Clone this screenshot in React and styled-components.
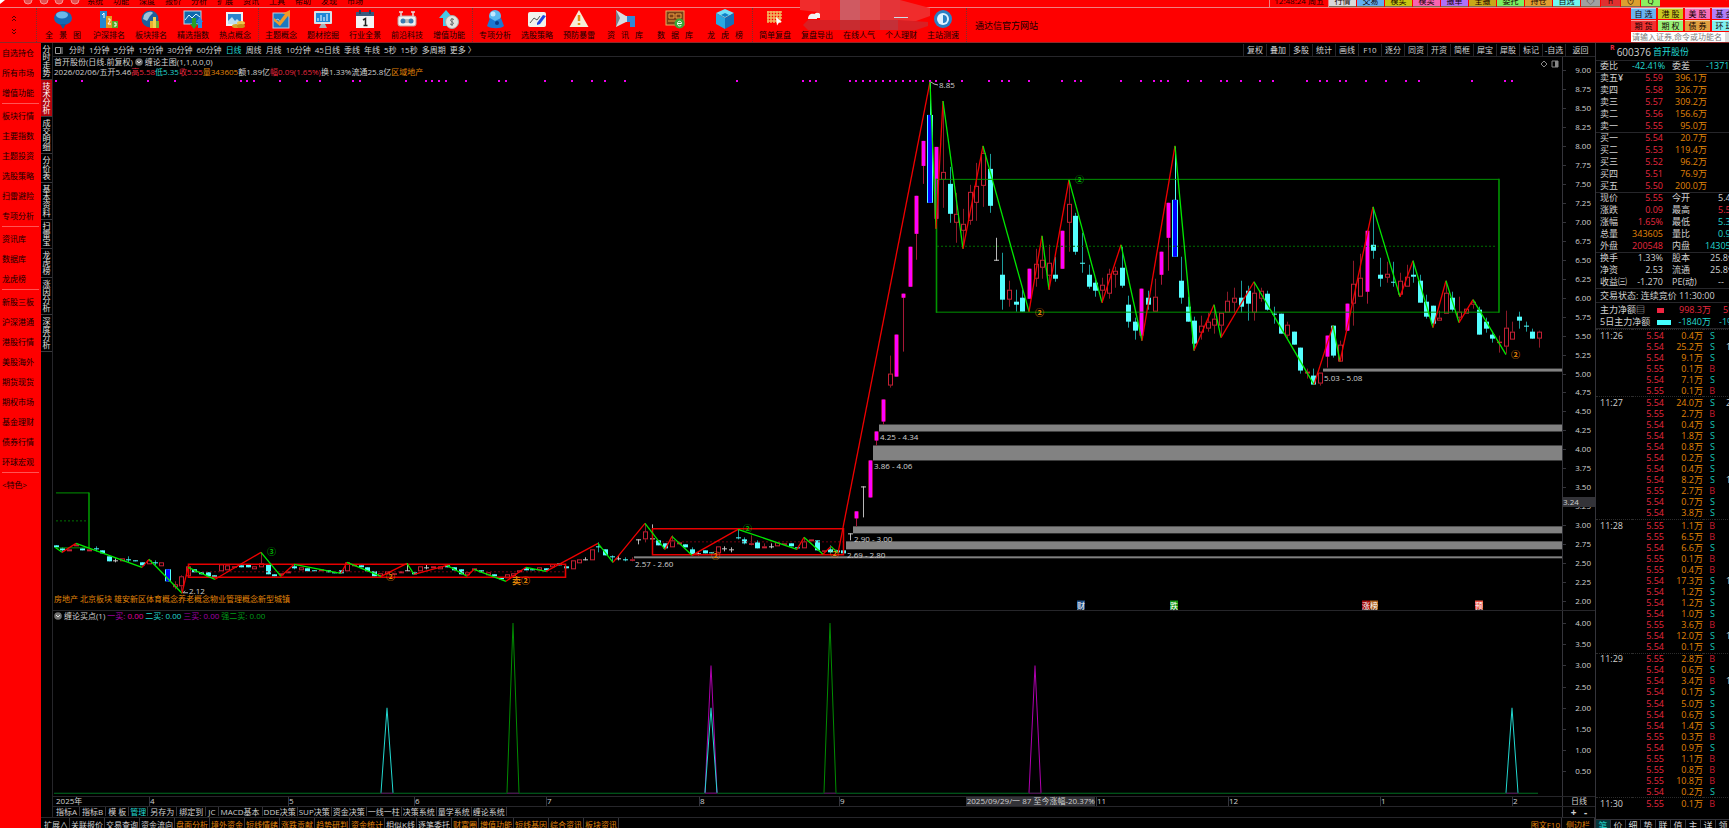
import React from "react";
import styled, { createGlobalStyle } from "styled-components";

const RED = "#fe0000";
const LINE = "#26262a";
const UP = "#e8283f";
const DOWN = "#22d8d0";
const AMBER = "#e08408";
const LIGHT = "#d0d0d0";

const Global = createGlobalStyle`
  *, *::before, *::after { box-sizing: border-box; }
  html, body { margin: 0; height: 100%; background: #000; overflow: hidden; }
  body { font: 8px/10px "Open Sans", "Noto Sans CJK SC", sans-serif; color: ${LIGHT}; }
  button, input { font: inherit; color: inherit; border: 0; margin: 0; padding: 0; background: none; white-space: nowrap; }
  a { color: inherit; text-decoration: none; }
  ul { list-style: none; margin: 0; padding: 0; }
`;

const Page = styled.div`
  display: flex;
  flex-direction: column;
  height: 100vh;
  overflow: hidden;
`;

/* ---------- header ---------- */
const Header = styled.header`
  position: relative;
  flex: none;
  background: ${RED};
  color: #140000;
  border-bottom: 1px solid #8c2a2a;
`;
const MenuStrip = styled.div`
  display: flex;
  align-items: flex-end;
  height: 8px;
  overflow: hidden;
  border-bottom: 1px solid #f08080;
`;
const WindowMarks = styled.svg`
  flex: none;
  width: 82px;
  height: 7px;
  margin-right: 5px;
`;
const MenuList = styled.nav`
  display: flex;
  flex: 1;
  gap: 10px;
`;
const MenuLink = styled.a`
  height: 12px;
  line-height: 12px;
`;
const Clock = styled.time`
  padding: 0 4px;
  height: 12px;
  line-height: 12px;
  border-left: 1px solid #f08080;
`;
const TradeButtons = styled.div`
  display: flex;
  gap: 1px;
  width: 401px;
  border-left: 1px solid #f08080;
`;
const TradeButton = styled.button`
  flex: none;
  width: ${(p) => (p.$small ? 19 : 27)}px;
  height: 12px;
  line-height: 10px;
  background: ${(p) => p.$bg};
  border-bottom: 1px solid #7c6a50;
`;
const WindowButtons = styled.svg`
  width: 64px;
  height: 7px;
  margin-left: 4px;
`;
const Toolbar = styled.div`
  display: flex;
  height: 34px;
`;
const Pager = styled.div`
  display: flex;
  flex-direction: column;
  justify-content: space-evenly;
  align-items: center;
  width: 36px;
  padding-right: 9px;
`;
const Chevron = styled.button`
  display: block;
  height: 8px;
  svg { display: block; }
`;
const Divider = styled.i`
  width: ${(p) => (p.$tight ? 1 : 3)}px;
  flex: none;
  margin-right: 1px;
  border-right: 1px dotted #7a3030;
`;
const Tool = styled.button`
  display: flex;
  flex-direction: column;
  align-items: center;
  flex: none;
  width: ${(p) => (p.$wide ? 50 : 42)}px;
  padding-top: 1px;
  line-height: 12px;
  svg { display: block; width: 20px; height: 20px; }
  span { word-spacing: 4px; }
`;
const SiteLink = styled.a`
  align-self: center;
  margin: 1px auto 0 7px;
  font-size: 9px;
`;
const Shortcuts = styled.div`
  width: 99px;
  flex: none;
  padding-left: 1px;
  overflow: hidden;
`;
const ShortcutGrid = styled.div`
  display: grid;
  grid-template-columns: repeat(4, 25px);
  grid-auto-rows: 11px;
  gap: 1px 2px;
`;
const Shortcut = styled.button`
  line-height: 10px;
  background: ${(p) => p.$bg};
  border-top: 1px solid #ffffff88;
`;
const SearchBox = styled.label`
  display: flex;
  height: 10px;
  margin-top: 1px;
  background: #fff;
  input { flex: 1; min-width: 0; color: #333; padding-left: 1px; height: 10px; }
  input::placeholder { color: #7c7c7c; opacity: 1; }
  button { width: 4px; background: #ddd; }
`;
const Smudge = styled.svg`
  position: absolute;
  left: 798px;
  top: 0;
`;

/* ---------- frame ---------- */
const Body = styled.div`
  display: flex;
  flex: 1;
  min-height: 0;
`;
const Sidebar = styled.nav`
  flex: none;
  width: 41px;
  background: ${RED};
  color: #140000;
`;
const SideLink = styled.a`
  display: block;
  height: 20px;
  line-height: 20px;
  padding-left: 2px;
`;
const SideRule = styled.hr`
  height: 3px;
  margin: 0 2px;
  border: 0;
  border-top: 1px solid #ff5454;
`;
const Center = styled.div`
  display: flex;
  flex-direction: column;
  flex: 1;
  min-width: 0;
`;
const Work = styled.div`
  display: flex;
  flex: 1;
  min-height: 0;
`;
const SideTabs = styled.div`
  flex: none;
  width: 12px;
  border-right: 1px solid ${LINE};
`;
const SideTab = styled.button`
  display: block;
  width: 11px;
  padding: 2px 1px;
  line-height: 8px;
  white-space: normal;
  word-break: break-all;
  border-bottom: 1px solid #3a3a3e;
  background: ${(p) => (p.$on ? "#b4060e" : "#000")};
  color: ${(p) => (p.$on ? "#fff" : "#e0e0e0")};
`;
const ChartColumn = styled.main`
  display: flex;
  flex-direction: column;
  flex: 1;
  min-width: 0;
`;
const PeriodBar = styled.div`
  display: flex;
  align-items: center;
  flex: none;
  height: 14px;
  border-bottom: 1px solid ${LINE};
`;
const Periods = styled.div`
  display: flex;
  flex: 1;
  gap: 4px;
  padding-left: 2px;
  svg { flex: none; }
`;
const Period = styled.button`
  color: ${(p) => (p.$on ? DOWN : LIGHT)};
`;
const Function = styled.button`
  width: 23px;
  height: 12px;
  border-left: 1px solid ${LINE};
  &:last-child { width: 30px; }
`;

/* ---------- panes ---------- */
const Pane = styled.section`
  display: flex;
  flex: ${(p) => p.$share} 1 0;
  min-height: 0;
  border-top: ${(p) => (p.$ruled ? `1px solid ${LINE}` : "0")};
`;
const Plot = styled.div`
  display: flex;
  flex-direction: column;
  flex: 1;
  min-width: 0;
`;
const InfoLine = styled.div`
  display: flex;
  align-items: center;
  flex: none;
  height: 10px;
  gap: ${(p) => p.$gap ?? 0}px;
  padding-left: 1px;
  white-space: nowrap;
`;
const Tint = styled.span`
  color: ${(p) => p.$color ?? LIGHT};
`;
const Canvas = styled.div`
  position: relative;
  flex: 1;
  min-height: 0;
  svg.plot { display: block; width: 100%; height: 100%; }
`;
const Note = styled.span`
  position: absolute;
  transform: translateY(-50%);
  white-space: nowrap;
  color: ${(p) => p.$color ?? LIGHT};
`;
const Mark = styled(Note)`
  font-size: 9px;
  font-weight: 700;
`;
const Flag = styled.span`
  position: absolute;
  transform: translateY(-50%);
  width: 8px;
  height: 9px;
  line-height: 9px;
  color: #fff;
  background: ${(p) => p.$bg};
`;
const Concepts = styled.div`
  position: absolute;
  left: 1px;
  bottom: 6px;
  display: flex;
  color: ${AMBER};
  a:first-child, a:nth-child(2) { margin-right: 2px; }
`;
const PaneTools = styled.svg`
  position: absolute;
  right: 2px;
  top: -18px;
`;
const Axis = styled.ol`
  position: relative;
  display: flex;
  flex-direction: column;
  justify-content: space-between;
  flex: none;
  width: 33px;
  margin: 0;
  padding: ${(p) => p.$pad};
  list-style: none;
  text-align: right;
  border-left: 1px solid #34343a;
  li { position: relative; height: 10px; padding-right: 4px; }
  li::before {
    content: "";
    position: absolute;
    left: 0;
    top: 5px;
    width: 3px;
    border-top: 1px solid #34343a;
  }
`;
const CursorPrice = styled.output`
  position: absolute;
  left: 0;
  right: 0;
  top: 79.5%;
  height: 10px;
  text-align: left;
  background: #333338;
`;
const DateRow = styled.div`
  display: flex;
  flex: none;
  height: 10px;
  border-top: 1px solid ${LINE};
  line-height: 8px;
`;
const Months = styled.div`
  display: flex;
  flex: 1;
`;
const Month = styled.span`
  position: relative;
  flex: ${(p) => p.$span} 1 0;
  min-width: 0;
  text-indent: 1px;
  box-shadow: inset 1px 0 0 #34343a;
  white-space: nowrap;
  &:first-child { box-shadow: none; text-indent: 3px; }
`;
const DateCursor = styled.output`
  position: absolute;
  right: 1px;
  top: 0;
  height: 9px;
  background: #333338;
`;
const Corner = styled.div`
  display: flex;
  justify-content: ${(p) => (p.$split ? "space-evenly" : "center")};
  flex: none;
  width: 33px;
  border-left: 1px solid #34343a;
  button { font-size: 10px; font-weight: 700; line-height: 9px; }
`;
const TabRow = styled.div`
  display: flex;
  flex: none;
  height: 11px;
  overflow: hidden;
  border-top: 1px solid ${LINE};
  line-height: ${(p) => (p.$low ? 13 : 9)}px;
`;
const Tabs = styled.div`
  display: flex;
  flex: 1;
  min-width: 0;
  padding-left: ${(p) => p.$inset}px;
`;
const Tab = styled.button`
  flex: none;
  align-self: flex-start;
  padding: 0 ${(p) => p.$pad ?? 1}px;
  border-right: 1px solid #34343a;
  color: ${(p) => p.$color ?? LIGHT};
`;

/* ---------- quote panel ---------- */
const Quote = styled.aside`
  display: flex;
  flex-direction: column;
  flex: none;
  width: 134px;
  overflow: hidden;
  border-left: 1px solid #34343a;
  font-size: 9px;
`;
const StockTitle = styled.h1`
  display: flex;
  align-items: center;
  gap: 2px;
  flex: none;
  height: 17px;
  margin: 0;
  padding-left: 14px;
  font-size: 10px;
  font-weight: 400;
  box-shadow: 0 1px 0 ${LINE};
  sup { font-size: 7px; line-height: 9px; align-self: flex-start; color: ${UP}; font-weight: 700; }
  b { font-weight: 400; font-size: 9px; color: ${DOWN}; }
`;
const Block = styled.div`
  flex: none;
  padding: ${(p) => (p.$roomy ? 2 : 0)}px 0 0 4px;
  box-shadow: 0 1px 0 ${LINE};
`;
const Line = styled.div`
  display: grid;
  grid-template-columns: ${(p) => p.$cols};
  height: 12px;
  line-height: 12px;
  white-space: nowrap;
`;
const Cell = styled.span`
  text-align: ${(p) => (p.$right ? "right" : "left")};
  padding-left: ${(p) => p.$in ?? 0}px;
  color: ${(p) => p.$color ?? LIGHT};
`;
const Swatch = styled.i`
  align-self: center;
  width: ${(p) => p.$w}px;
  height: 5px;
  background: ${(p) => p.$bg};
`;
const TickArea = styled.div`
  flex: 1;
  min-height: 0;
  padding: 1px 0 9px;
`;
const Ticks = styled.table`
  width: 150px;
  height: 100%;
  table-layout: fixed;
  border-collapse: collapse;
  font-size: 9px;
  line-height: 10px;
  td { padding: 0; text-align: right; color: ${AMBER}; white-space: nowrap; }
  td:first-child { width: 36px; padding-left: 4px; text-align: left; color: ${LIGHT}; }
  td:nth-child(2) { width: 32px; color: ${UP}; }
  td:nth-child(3) { width: 39px; }
  td:nth-child(4) { width: 12px; }
  td:nth-child(5) { text-align: left; padding-left: 11px; color: ${LIGHT}; }
`;
const TickRow = styled.tr`
  border-top: ${(p) => (p.$first ? "1px dotted #2c2c2c" : "0")};
  && td:nth-child(4) { color: ${(p) => (p.$buy ? "#c81c30" : "#18c8b8")}; }
`;
const QuoteTabs = styled.div`
  display: flex;
  flex: none;
  height: 9px;
  border-top: 1px solid #34343a;
  overflow: hidden;
`;
const QuoteTab = styled.button`
  flex: none;
  width: 15px;
  height: 12px;
  border-right: 1px solid #34343a;
  color: ${(p) => (p.$on ? DOWN : LIGHT)};
  background: ${(p) => (p.$on ? "#06363a" : "none")};
`;

/* ---------- icons ---------- */
const ICONS = {
  globe: (
    <>
      <ellipse cx="10" cy="9" rx="9" ry="7" fill="#1668b4" />
      <ellipse cx="9" cy="6" rx="6" ry="3.4" fill="#6bb8ea" />
      <path d="M7 15h6l-3 5z" fill="#125a9c" />
    </>
  ),
  podium: (
    <>
      <rect x="1" y="2" width="7" height="17" fill="#2488d0" />
      <rect x="7" y="7" width="6" height="12" fill="#e09a20" />
      <rect x="13" y="12" width="6" height="7" fill="#58a828" />
      <path d="M3 6l2-2v5M9 10h2v2l-2 3h3M15 14h2v3h-2" stroke="#fff" fill="none" />
    </>
  ),
  earthbars: (
    <>
      <circle cx="9" cy="10" r="8.5" fill="#1d5f9c" />
      <path d="M3 6c3-4 8-4 9-2l-3 3-3 5-4-2z" fill="#9fc4d8" />
      <rect x="9" y="12" width="3" height="7" fill="#e8b030" />
      <rect x="12" y="8" width="3" height="11" fill="#f4d050" />
      <rect x="15" y="12" width="3" height="7" fill="#78b030" />
    </>
  ),
  indices: (
    <>
      <rect x="1" y="2" width="17" height="13" fill="#0e6aac" stroke="#b8d8ea" />
      <path d="M2 11l4-5 3 3 4-4 4 3" stroke="#d8f0ff" fill="none" />
      <path d="M9 9h4v6h2l-4 5-4-5h2z" fill="#28a028" />
      <path d="M15 19v-6h-2l4-5 3 5h-1v6z" fill="#2a8ae0" />
    </>
  ),
  photo: (
    <>
      <rect x="1" y="3" width="17" height="14" fill="#eef4f8" />
      <rect x="3" y="5" width="13" height="10" fill="#2c84cc" />
      <path d="M3 12l4-4 3 4 2-2 4 4v1H3z" fill="#bfe0f0" />
      <ellipse cx="11" cy="17" rx="4" ry="2" fill="#d8a028" />
      <ellipse cx="16" cy="14" rx="4" ry="2" fill="#f0c848" />
      <ellipse cx="16" cy="17" rx="4" ry="2" fill="#c88c18" />
    </>
  ),
  rise: (
    <>
      <rect x="2" y="4" width="16" height="15" fill="#1c78c0" stroke="#b8d0e0" />
      <path d="M3 12l4-2 3 4 6-8" stroke="#9fd0f0" fill="none" />
      <path d="M3 9l5 4 6-8h-3l8-4v8l-2-2-8 10-6-5z" fill="#f09a28" />
    </>
  ),
  monitor: (
    <>
      <rect x="1" y="2" width="18" height="13" rx="1" fill="#d8e0e6" />
      <rect x="3" y="4" width="14" height="9" fill="#1c86d8" />
      <path d="M5 12V9M8 12V6M11 12V8M14 12V5" stroke="#fff" />
      <path d="M8 15h4l2 4H6z" fill="#a8b0b8" />
    </>
  ),
  calendar: (
    <>
      <rect x="1" y="3" width="18" height="16" fill="#f4f4f4" />
      <rect x="1" y="3" width="18" height="4" fill="#3a5a7c" />
      <path d="M5 1v4M15 1v4" stroke="#26405c" strokeWidth="2" />
      <path d="M8 11l2.5-1.500v7M8.500 16.500h4" stroke="#222" strokeWidth="1.500" fill="none" />
    </>
  ),
  robot: (
    <>
      <rect x="1" y="7" width="18" height="10" rx="2" fill="#f0f0f0" stroke="#c0a0a0" />
      <path d="M4 7V3M16 7V3M2 3h4M14 3h4" stroke="#e8d8d8" strokeWidth="1.500" />
      <circle cx="6" cy="12" r="2.500" fill="#3a7ab0" />
      <circle cx="14" cy="12" r="2.500" fill="#3a7ab0" />
      <path d="M9 10v4M11 10v4" stroke="#888" />
    </>
  ),
  dollar: (
    <>
      <path d="M7 1l7 8h-3v8H4V9H0z" fill="#48c8e8" />
      <circle cx="13" cy="13" r="6.500" fill="#e4e4e0" stroke="#aaa" />
      <path d="M15 10.500c-3-1.500-5 1-2 2.300s1 3.700-2 2.200M13 9v8" stroke="#666" fill="none" />
    </>
  ),
  analyst: (
    <>
      <circle cx="10" cy="7" r="6" fill="#58b8f0" />
      <path d="M2 17l3-8 5 3 6-3 3 8c-3 3-13 3-17 0z" fill="#1c78d0" />
      <circle cx="8" cy="5" r="2.500" fill="#c0e8ff" />
      <circle cx="12" cy="14" r="2" fill="#0c3c88" />
    </>
  ),
  strategy: (
    <>
      <rect x="1" y="3" width="18" height="15" rx="2" fill="#f2f2ec" />
      <path d="M3 14l4-5 3 2 3-4" stroke="#555" fill="none" />
      <path d="M10 14l6-8 3 1-6 8-3 1z" fill="#2048e0" />
    </>
  ),
  warning: (
    <>
      <path d="M10 1l9.500 17H.5z" fill="#f6eed8" />
      <path d="M10 6v6M10 14v2" stroke="#e09018" strokeWidth="2.500" />
    </>
  ),
  horn: (
    <>
      <path d="M1 1l10 6h7v6h-7L1 18z" fill="#d8dce0" />
      <path d="M1 1l4 8-4 9z" fill="#78828c" />
      <path d="M12 7h8v11h-5v-5h-3z" fill="#3088d8" />
    </>
  ),
  database: (
    <>
      <rect x="1" y="2" width="18" height="14" fill="#7a4018" stroke="#e8b060" />
      <path d="M4 5h5v4H4zM11 5h5v4h-5zM3 12h10" stroke="#f0a040" fill="none" />
      <circle cx="14.500" cy="14.500" r="5" fill="#38a838" />
      <path d="M12.500 14.500h4c0-3-4-3-4 0s3 3 4 1.500" stroke="#fff" fill="none" />
    </>
  ),
  cube: (
    <>
      <path d="M10 0l9 4-9 5-9-5z" fill="#70e0f8" />
      <path d="M1 4l9 5v11l-9-5z" fill="#28a8e0" />
      <path d="M19 4l-9 5v11l9-5z" fill="#1470b8" />
      <path d="M10 4l4 2-4 2-4-2z" fill="#0f80c8" />
    </>
  ),
  grid: (
    <>
      <path d="M3 2v12M6 2v12M9 2v12M12 2v12M15 2v12M2 3h15M2 6h15M2 9h15M2 12h11" stroke="#f0b860" strokeWidth="1.500" />
      <path d="M11 8l6 5-3 .5-2 3z" fill="#fff" />
    </>
  ),
  lamp: <path d="M6 9c0-7 9-7 9 0z" fill="#f4f4f4" />,
  none: null,
  bank: <path d="M3 6h15M4 18h14" stroke="#d8e0e8" strokeWidth="2" />,
  speed: (
    <>
      <circle cx="10" cy="10" r="9" fill="#2a80c4" />
      <circle cx="10" cy="10" r="6" fill="#dff2ff" />
      <path d="M10 6a4 4 0 0 1 0 8z" fill="#2a80c4" />
    </>
  ),
};
const Icon = ({ name }) => <svg viewBox="0 0 20 20" aria-hidden="true">{ICONS[name]}</svg>;

const TOOLS = [
  ["全 景 图", "globe", 1], ["沪深排名", "podium"], ["板块排名", "earthbars"], ["精选指数", "indices"], ["热点概念", "photo"], null,
  ["主题概念", "rise"], ["题材挖掘", "monitor"], ["行业全景", "calendar"], ["前沿科技", "robot"], ["增值功能", "dollar"], null,
  ["专项分析", "analyst"], ["选股策略", "strategy"], ["预防暴雷", "warning"], ["资 讯 库", "horn", 1], ["数 据 库", "database", 1], ["龙 虎 榜", "cube", 1], null,
  ["简单复盘", "grid"], ["复盘导出", "lamp"], ["在线人气", "none"], ["个人理财", "bank"], ["主站测速", "speed"], null,
];
const MENUS = "系统 功能 深度 报价 分析 扩展 资讯 工具 帮助 发现 市场".split(" ");
const TRADES = [
  ["行情", "#d8d8d8"], ["交易", "#62aef0"], ["模买", "#c8c810"], ["模卖", "#f864b0"], ["撤单", "#b070f8"],
  ["全撤", "#c8a818"], ["委托", "#7af060"], ["持仓", "#e0a030"], ["自选", "#70f8f0"],
  ["◇", "#a0a0a0", 1], ["п", "#e03030", 1], ["⊙", "#dca030", 1], ["Q", "#8cf060", 1],
];
const SHORTCUTS = [
  ["自 选", "#68b4f0"], ["港 股", "#c8c820"], ["美 股", "#f870b8"], ["基 金", "#b080f8"],
  ["期 货", "#f03030"], ["期 权", "#98f078"], ["债 券", "#e0a040"], ["环 球", "#80f0f0"],
];
const SIDE = [
  ["自选持仓", "所有市场", "增值功能"],
  ["板块行情", "主要指数", "主题投资", "选股策略", "扫雷避险", "专项分析"],
  ["资讯库", "数据库", "龙虎榜"],
  ["新股三板", "沪深港通", "港股行情", "美股海外", "期货现货", "期权市场", "基金理财", "债券行情", "环球宏观"],
  ["<特色>"],
];
const SIDE_TABS = ["分时走势", "技术分析", "成交明细", "分价表", "基本资料", "扫雷宝", "龙虎榜", "涨因分析", "深度分析"];
const PERIODS = ["分时", "1分钟", "5分钟", "15分钟", "30分钟", "60分钟", "日线", "周线", "月线", "10分钟", "45日线", "季线", "年线", "5秒", "15秒", "多周期", "更多 〉"];
const FUNCTIONS = ["复权", "叠加", "多股", "统计", "画线", "F10", "逐分", "同资", "开资", "简框", "犀宝", "犀股", "标记", "-自选", "返回"];

/* candles: kind, x, body top, body bottom, wick top, wick bottom
   m = limit up, c = falling, h = rising, b = heavy fall, w = flat */
const CANDLES = `
c 56 546 548|c 62 549 551 548 553|h 69 550 552|h 76 545 547|c 82 549 551|h 89 550 552|c 96 549 550 547 552|c 102 551 554|c 109 557 562|w 115 561 562 559 563|h 122 559 562|c 128 560 561 557 563|c 135 561 562|c 142 563 566|h 149 561 565|c 155 563 564 561 566|h 161 563 567|b 168 570 582|h 175 585 588 582 590|h 181 577 587 576 592|h 188 567 577|c 194 570 573|c 201 573 575|c 208 573 577|c 214 576 578|h 221 565 572|h 227 566 571|h 234 567 568|c 241 566 568|c 248 565 568|h 254 567 570|h 261 564 568 553 568|c 268 565 575|c 274 575 577|h 281 574 576|h 288 572 574|c 294 567 569 565 570|h 301 568 571|c 307 569 572|c 314 571 572|h 321 570 572|c 328 571 573|c 334 573 574|c 341 571 574|h 347 563 572|h 354 565 567|c 361 566 568|c 367 568 572|c 374 572 577|h 380 574 577|h 387 572 575|h 394 574 575|h 401 572 574|w 407 571 572 564 572|c 414 573 575|h 420 567 572|w 426 568 569 565 570|h 433 567 569|h 440 567 570|c 447 566 568|c 454 568 571|c 461 570 575|h 467 573 576|h 474 569 571|c 481 571 573|h 488 573 576|c 494 575 577|c 501 578 580|h 507 575 579
h 513 574 577|h 519 571 573|c 526 569 571|c 532 570 571|h 539 568 571|c 546 569 571|h 552 565 568|c 559 564 566|c 566 567 569|h 573 561 570|h 579 560 564|w 585 560 561 558 561|h 592 550 561|c 598 547 548 543 553|c 605 550 556|c 612 557 558 556 563|w 618 559 560 556 561|c 625 560 561 558 562|h 632 560 561 558 562|w 638 540 541 540 545|h 645 532 540 524 543|w 652 539 540 525 540|c 658 541 546|c 665 544 549|h 672 541 548 536 548|h 679 543 545|c 685 545 548|c 692 550 555 548 556|w 698 554 555 553 556|c 705 551 554|c 711 553 554|h 718 547 554|w 724 549 550 547 552|w 731 550 551 548 553|c 738 538 539 530 540|c 744 540 544 538 545|h 751 544 545 536 546|c 757 543 549 541 549|h 764 547 549 544 549|w 771 547 548 544 549|h 777 543 547|h 784 544 545|c 791 544 547|c 797 548 549|h 804 542 549 538 549|h 811 540 542|c 817 541 551|h 824 551 552|c 830 550 553 546 554|c 837 551 553|c 843 551 554
w 850 534 535 534 541|m 856 512 519 512 527|w 863 487 488 487 518|m 870 461 498|m 876 432 441 432 446|m 883 400 422 400 425|h 890 374 386 356 388|m 896 335 377 335 377|m 903 294 298 294 352|m 910 247 287|m 916 196 234 196 260|m 923 141 166 141 184|b 930 115 203 82 203|m 936 147 219 147 227|h 943 172 180 102 208|c 950 184 214 167 223|h 956 214 223 193 243|h 963 224 231 209 248|h 970 192 221 185 225|h 976 186 203 163 221|h 983 153 186 147 207|c 990 169 206 154 213|w 996 260 261 238 261|c 1002 275 300 253 310|h 1009 290 300 281 307|c 1016 302 305 290 312|c 1022 298 312 290 312|m 1029 269 299|h 1036 264 279 249 287|h 1042 260 268 237 279|h 1049 263 276 245 290|c 1055 275 279 257 282|m 1062 231 269|h 1069 204 223 181 252|c 1075 216 252 213 255|c 1082 263 264 233 273|c 1089 275 287 265 289|c 1095 283 291 280 297|h 1102 285 291 278 303|h 1109 274 294 269 299|h 1115 271 275 267 288|c 1122 268 286 247 288|c 1128 305 322 296 328|c 1135 322 331 318 340|m 1141 289 336 289 341|c 1148 298 305 291 310|h 1155 297 312 279 312|m 1161 252 275 252 285|m 1168 203 238 203 271|b 1175 200 257 147 257|c 1181 281 298 257 304|c 1188 307 322 297 322|c 1194 321 344 317 351|h 1201 326 333 316 340|h 1208 322 329 313 332|h 1214 319 326 307 334
h 1221 313 326 313 337|h 1227 301 313 292 313|h 1234 298 303 288 313|c 1241 298 307 281 313|c 1248 291 304 286 321|h 1254 293 313 282 321|h 1261 291 299 288 302|c 1267 294 310 291 311|c 1274 314 315 307 324|c 1281 314 334|h 1287 325 336 322 339|c 1294 332 345|c 1300 348 371 348 374|h 1307 372 374 369 379|c 1313 376 385 369 385|h 1320 373 384 373 386|m 1327 336 357 336 368|c 1333 326 356 326 358|h 1340 345 362 341 362|m 1347 304 331|h 1353 284 304 261 326|h 1360 278 297 254 297|m 1367 231 292 231 304|c 1373 245 251 207 259|c 1380 275 279 258 287|h 1387 274 278 262 283|c 1393 282 283 262 287|h 1400 281 295 273 297|h 1407 277 287 265 287|c 1413 275 277 261 283|c 1420 281 303 275 303|c 1426 302 317 295 319|c 1433 306 324 306 327|h 1439 318 321 311 321|h 1446 293 314 281 314|c 1452 298 310 292 312|h 1459 312 318 297 323|h 1466 309 314|h 1473 302 305 300 309|c 1479 310 335 307 335|c 1486 322 329 318 333|c 1492 335 339 332 343|h 1499 342 343 336 353|h 1506 328 347 311 354|h 1512 332 340 322 340|c 1519 317 321 312 329|c 1526 326 327 322 332|c 1532 332 339 329 339|h 1539 332 339 331 348`
  .trim().split(/[|\n]/).map((s) => {
    const [k, ...n] = s.split(" ");
    const [x, t, b, hi = t, lo = b] = n.map(Number);
    return { k, x, t, b, hi, lo };
  });

const SWINGS = [
  [55, 548], [62, 553], [76, 544], [142, 568], [149, 560], [182, 594], [188, 568], [215, 580], [261, 553], [281, 577],
  [294, 565], [341, 574], [347, 563], [381, 577], [407, 564], [414, 575], [447, 566], [467, 577], [474, 570], [506, 582],
  [526, 568], [546, 572], [598, 544], [613, 563], [645, 524], [665, 550], [672, 537], [692, 556], [738, 530], [797, 550],
  [804, 538], [823, 555], [831, 547], [838, 554], [930, 82], [936, 229], [943, 101], [963, 249], [983, 146], [1029, 312],
  [1042, 236], [1049, 290], [1069, 180], [1102, 303], [1121, 245], [1142, 341], [1175, 146], [1194, 351], [1214, 305],
  [1221, 338], [1254, 282], [1314, 385], [1333, 326], [1340, 362], [1373, 207], [1400, 297], [1413, 261], [1433, 328],
  [1446, 281], [1459, 323], [1473, 300], [1506, 355],
];
const DOTS = [56, 82, 148, 175, 241, 247, 254, 280, 307, 320, 353, 360, 406, 426, 432, 439, 446, 466, 499, 506, 545, 572, 592, 605, 625, 737, 803, 810, 816, 850, 856, 863, 870, 876, 883, 890, 896, 903, 910, 916, 923, 930, 936, 949, 962, 989, 1002, 1009, 1029, 1062, 1075, 1081, 1121, 1141, 1154, 1161, 1168, 1188, 1201, 1221, 1227, 1241, 1260, 1273, 1307, 1320, 1327, 1340, 1346, 1366, 1386, 1406, 1419, 1472, 1505, 1512];
const GAPS = [[634, 557, 2], [846, 542, 8], [853, 527, 7], [873, 446, 15], [879, 425, 7], [1323, 369, 3]];

const FIELD = { x: 53, y: 77, w: 1509, h: 534 };
const at = (x, y) => ({
  left: `${((x - FIELD.x) / FIELD.w) * 100}%`,
  top: `${((y - FIELD.y) / FIELD.h) * 100}%`,
});
const NOTES = [
  ["8.85", 939, 85], ["5.03 - 5.08", 1324, 378], ["4.25 - 4.34", 880, 438], ["3.86 - 4.06", 874, 467],
  ["2.90 - 3.00", 854, 540], ["2.69 - 2.80", 847, 556], ["2.57 - 2.60", 635, 565], ["2.12", 189, 592],
];
const MARKS = [
  ["③", 267, 553, "#00b400"], ["②", 743, 530, "#00b400"], ["②", 1075, 180, "#00b400"],
  ["②", 386, 578, AMBER], ["卖②", 512, 582, AMBER], ["②", 711, 557, AMBER], ["②", 830, 555, AMBER],
  ["②", 1035, 313, AMBER], ["②", 1511, 355, AMBER],
];
const FLAGS = [["财", 1077, "#1c4c84"], ["跌", 1170, "#109010"], ["涨", 1362, "#a00808"], ["榜", 1370, "#a85c18"], ["预", 1475, "#e85040"]];

function Candle({ k, x, t, b, hi, lo }) {
  const h = Math.max(b - t, 1);
  const tone = { m: "#a81838", c: "#1c9c9c", h: "#8c1a28", b: "#50ffff", w: "#b8b8b8" }[k];
  return (
    <g>
      {k === "h" ? (
        <>
          {hi < t && <rect x={x} y={hi} width="1" height={t - hi} fill={tone} />}
          {lo > b && <rect x={x} y={b} width="1" height={lo - b} fill={tone} />}
          <rect x={x - 1.5} y={t + 0.5} width="4" height={Math.max(h - 1, 0.5)} fill="none" stroke="#c42034" />
        </>
      ) : (
        <rect x={x} y={hi} width="1" height={lo - hi} fill={tone} />
      )}
      {k === "c" && <rect x={x - 2} y={t} width="5" height={h} fill="#54ffff" />}
      {k === "w" && <rect x={x - 2} y={t} width="5" height="1" fill="#c8c8c8" />}
      {k === "m" && <><rect x={x - 2} y={t} width="5" height={h} fill="#90103c" /><rect x={x - 1} y={t} width="3" height={h} fill="#ff00ff" /></>}
      {k === "b" && <><rect x={x - 3} y={t} width="6" height={h} fill="#50ffff" /><rect x={x - 2} y={t} width="4" height={h} fill="#0000ff" /></>}
    </g>
  );
}

const MainPlot = () => (
  <svg className="plot" viewBox="53 77 1509 534" preserveAspectRatio="none" role="img" aria-label="日线">
    {DOTS.map((x) => <rect key={x} x={x - 1} y="80" width="2" height="2" fill="#f000f0" />)}
    {GAPS.map(([x, y, h]) => <rect key={x} x={x} y={y} width={1562 - x} height={h} fill="#828282" />)}
    {CANDLES.map((c) => <Candle key={c.x} {...c} />)}
    <g fill="none" stroke="#009400">
      <path d="M56 493.500h33M56 548.500h33M936 179.500h563M936 312.500h563" />
      <path d="M89 493v56M936.500 179v134M1499 179v134" strokeWidth="1.600" />
      <path d="M56 521.500h32M937 246.500h560" stroke="#007000" strokeDasharray="2 2" />
    </g>
    <g fill="none" stroke="#e60000">
      <path d="M188.500 565h377v13h-377z" strokeWidth="1.600" />
      <path d="M652.500 529.500h191v26h-191z" strokeWidth="1.500" />
      <path d="M190 572.500h375M654 542.500h189" stroke="#700010" strokeDasharray="2 2" />
    </g>
    {SWINGS.slice(1).map(([x, y], i) => {
      const [px, py] = SWINGS[i];
      return <line key={x} x1={px} y1={py} x2={x} y2={y} stroke={y < py ? "#f00000" : "#00e800"} strokeWidth="1.300" />;
    })}
    <path d="M931 82l3 2 4 1M183 593.500h5M183 593.500l2-2" stroke="#bbb" fill="none" />
  </svg>
);

const PEAKS = [[387, 708, DOWN], [513, 624, "#008c00"], [711, 666, "#b000b0"], [711, 708, DOWN], [830, 624, "#008c00"], [1035, 666, "#b000b0"], [1512, 708, DOWN]];
const SubPlot = () => (
  <svg className="plot" viewBox="53 622 1509 173" preserveAspectRatio="none" role="img" aria-label="缠论买点">
    <path d="M54 792.500h1484" stroke="#006c20" />
    {PEAKS.map(([x, y, color]) => (
      <g key={`${x}-${y}`}>
        <path d={`M${x - 6} 792.500h12`} stroke="#600060" />
        <path d={`M${x - 6} 792L${x} ${y}L${x + 6} 792`} fill="none" stroke={color} />
      </g>
    ))}
  </svg>
);

const INDICATORS = [["指标A", 2], ["指标B", 2], ["模 板", 2], ["管理", 1], ["另存为", 2], ["绑定到", 2], ["JC", 2], ["MACD基本", 2], ["DDE决策"], ["SUP决策"], ["资金决策"], ["一线一柱"], ["决策系统"], ["量学系统"], ["缠论系统"]];
const EXTENSIONS = ["扩展∧", "关联报价", "交易查询", "资金流向", "*盘面分析", "*境外资金", "*短线情绪", "*涨跌贡献", "*趋势研判", "*资金统计", "相似K线", "逐笔委托", "*财富圈", "*增值功能", "*短线基因", "*综合资讯", "*板块资讯"];
const MONTHS = [["2025年", 96], ["4", 139], ["5", 126], ["6", 132], ["7", 153], ["8", 140], ["9", 257], ["11", 132], ["12", 152], ["1", 132], ["2", 50]];

const BOOK_COLS = "32px 31px 44px";
const PAIR_COLS = "32px 31px 42px 60px";
const ASKS = [["卖五¥", "5.59", "396.1万"], ["卖四", "5.58", "326.7万"], ["卖三", "5.57", "309.2万"], ["卖二", "5.56", "156.6万"], ["卖一", "5.55", "95.0万"]];
const BIDS = [["买一", "5.54", "20.7万"], ["买二", "5.53", "119.4万"], ["买三", "5.52", "96.2万"], ["买四", "5.51", "76.9万"], ["买五", "5.50", "200.0万"]];
const STATS = [
  ["现价", "5.55", UP, "今开", "5.46", LIGHT], ["涨跌", "0.09", UP, "最高", "5.58", UP], ["涨幅", "1.65%", UP, "最低", "5.35", DOWN],
  ["总量", "343605", AMBER, "量比", "0.95", DOWN], ["外盘", "200548", UP, "内盘", "143057", DOWN, 0],
];
const SHARES = [["换手", "1.33%", LIGHT, "股本", "25.8亿", LIGHT, 5], ["净资", "2.53", LIGHT, "流通", "25.8亿", LIGHT, 5], ["收益㈢", "-1.270", LIGHT, "PE(动)", "--", LIGHT]];
const TICKS = {
  "11:26": "4 0.4 S|4 25.2 S 1|4 9.1 S|5 0.1 B|4 7.1 S|5 0.1 B",
  "11:27": "4 24.0 S 2|5 2.7 B|4 0.4 S|4 1.8 S|4 0.8 S|4 0.2 S|4 0.4 S|4 8.2 S 1|5 2.7 B|4 0.7 S|4 3.8 S",
  "11:28": "5 1.1 B|5 6.5 B|4 6.6 S|5 0.1 B|5 0.4 B|4 17.3 S 1|4 1.2 S|4 1.2 S|4 1.0 S|5 3.6 B|4 12.0 S 1|4 0.1 S",
  "11:29": "5 2.8 B|4 0.6 S|4 3.4 B 1|4 0.1 S|4 5.0 S|4 0.6 S|4 1.4 S|5 0.3 B|4 0.9 S|5 1.1 B|5 0.8 B|5 10.8 B|4 0.2 S",
  "11:30": "5 0.1 B",
};

const Book = ({ rows }) => (
  <Block>
    {rows.map(([label, price, volume]) => (
      <Line key={label} $cols={BOOK_COLS}>
        <Cell>{label}</Cell>
        <Cell $right $color={UP}>{price}</Cell>
        <Cell $right $color={AMBER}>{volume}</Cell>
      </Line>
    ))}
  </Block>
);
const Pairs = ({ rows }) => (
  <Block>
    {rows.map(([a, v, tone, b, w, tone2, inset = 13]) => (
      <Line key={a} $cols={PAIR_COLS}>
        <Cell>{a}</Cell>
        <Cell $right $color={tone}>{v}</Cell>
        <Cell $in={9}>{b}</Cell>
        <Cell $in={inset} $color={tone2}>{w}</Cell>
      </Line>
    ))}
  </Block>
);
const Bullet = () => (
  <svg width="8" height="8" viewBox="0 0 8 8" aria-hidden="true">
    <circle cx="4" cy="4" r="3.800" fill="#707070" />
    <path d="M2 3l2 2 2-2" stroke="#ddd" fill="none" />
  </svg>
);

export default function App() {
  return (
    <Page>
      <Global />
      <Header>
        <MenuStrip>
          <WindowMarks viewBox="0 0 82 7" aria-hidden="true">
            <path d="M0 0h5L0 4z" fill="#fff" />
            {[28, 44, 59, 75].map((x) => <circle key={x} cx={x} cy="0" r="4" fill="#e05050" stroke="#ff9090" />)}
          </WindowMarks>
          <MenuList>{MENUS.map((m) => <MenuLink key={m} href="#">{m}</MenuLink>)}</MenuList>
          <Clock>12:48:24 周五</Clock>
          <TradeButtons>
            {TRADES.map(([t, bg, small]) => <TradeButton key={t} $bg={bg} $small={small}>{t}</TradeButton>)}
            <WindowButtons viewBox="0 0 64 7" aria-hidden="true">
              <path d="M2 0h5v3H2zM20 2h6M38 4h6V0M56 0l6 5" stroke="#ffd0d0" fill="none" />
            </WindowButtons>
          </TradeButtons>
        </MenuStrip>
        <Toolbar>
          <Pager>
            <Chevron aria-label="上翻"><svg width="6" height="8"><path d="M1 4l2-2 2 2M1 7l2-2 2 2" stroke="#500" fill="none" /></svg></Chevron>
            <Chevron aria-label="下翻"><svg width="6" height="8"><path d="M1 1l2 2 2-2M1 4l2 2 2-2" stroke="#500" fill="none" /></svg></Chevron>
          </Pager>
          <Divider $tight />
          {TOOLS.map((t, i) => (t ? <Tool key={t[0]} $wide={t[2]}><Icon name={t[1]} /><span>{t[0]}</span></Tool> : <Divider key={i} />))}
          <SiteLink href="#">通达信官方网站</SiteLink>
          <Shortcuts>
            <ShortcutGrid>{SHORTCUTS.map(([t, bg]) => <Shortcut key={t} $bg={bg}>{t}</Shortcut>)}</ShortcutGrid>
            <SearchBox>
              <input type="text" aria-label="搜索" placeholder="请输入证券,命令或功能名" />
              <button aria-label="展开" />
            </SearchBox>
          </Shortcuts>
        </Toolbar>
        <Smudge width="134" height="32" viewBox="0 0 134 32" aria-hidden="true">
          <path d="M2 0h100l30 8v8l-14 5H30L20 12 2 10z" fill="#f02c2c" />
          <path d="M22 0h20v20H22z" fill="#f42020" />
          <path d="M42 0h20v20H42z" fill="#cf5a62" />
          <path d="M62 0h20v20H62z" fill="#e04a4c" />
          <path d="M82 0h20v20H82z" fill="#e43438" />
          <path d="M10 20h90l30 2v4l-12 4H10l-5-5z" fill="#d82024" />
          <path d="M42 20h20v10H42z" fill="#c82c30" />
          <path d="M82 20h18v10H82z" fill="#c43038" />
          <path d="M10 19c0-7 9-7 9 0z" fill="#f0f0f0" />
          <path d="M96 17.500h14" stroke="#ccdce8" />
        </Smudge>
      </Header>
      <Body>
        <Sidebar>
          {SIDE.map((group, i) => (
            <React.Fragment key={i}>
              {i > 0 && <SideRule />}
              {group.map((t) => <SideLink key={t} href="#">{t}</SideLink>)}
            </React.Fragment>
          ))}
        </Sidebar>
        <Center>
          <Work>
            <SideTabs>{SIDE_TABS.map((t, i) => <SideTab key={t} $on={i === 1}>{t}</SideTab>)}</SideTabs>
            <ChartColumn>
              <PeriodBar>
                <Periods>
                  <svg width="10" height="10" aria-hidden="true"><path d="M.5 2.500h5v6h-5zM7 2v7" stroke="#999" fill="none" /></svg>
                  {PERIODS.map((t) => <Period key={t} $on={t === "日线"}>{t}</Period>)}
                </Periods>
                {FUNCTIONS.map((t) => <Function key={t}>{t}</Function>)}
              </PeriodBar>
              <Pane $share={554}>
                <Plot>
                  <InfoLine $gap={2}>
                    <span>首开股份(日线.前复权)</span><Bullet /><span>缠论主图(1,1,0,0,0)</span>
                  </InfoLine>
                  <InfoLine>
                    <Tint>2026/02/06/五</Tint><Tint>开5.46</Tint><Tint $color={UP}>高5.58</Tint><Tint $color={DOWN}>低5.35</Tint>
                    <Tint $color={UP}>收5.55</Tint><Tint $color={AMBER}>量343605</Tint><Tint>额1.89亿</Tint>
                    <Tint $color={UP}>幅0.09(1.65%)</Tint><Tint>换1.33%</Tint><Tint>流通25.8亿</Tint><Tint $color={AMBER}>区域地产</Tint>
                  </InfoLine>
                  <Canvas>
                    <MainPlot />
                    <PaneTools width="20" height="10" aria-hidden="true">
                      <path d="M1 5l3-3 3 3-3 3zM12 2h6v6h-6z" stroke="#888" fill="none" />
                      <path d="M15 2h3v6h-3z" fill="#888" />
                    </PaneTools>
                    {NOTES.map(([t, x, y]) => <Note key={t} style={at(x, y)}>{t}</Note>)}
                    {MARKS.map(([t, x, y, color]) => <Mark key={x} $color={color} style={at(x, y)}>{t}</Mark>)}
                    {FLAGS.map(([t, x, bg]) => <Flag key={t} $bg={bg} style={at(x, 606)}>{t}</Flag>)}
                    <Concepts>
                      {["房地产", "北京板块", "雄安新区", "体育概念", "养老概念", "物业管理概念", "新型城镇"].map((t) => <a key={t} href="#">{t}</a>)}
                    </Concepts>
                  </Canvas>
                </Plot>
                <Axis $pad="8px 0 4px">
                  {Array.from({ length: 29 }, (_, i) => <li key={i}>{(9 - i / 4).toFixed(2)}</li>)}
                  <CursorPrice>3.24</CursorPrice>
                </Axis>
              </Pane>
              <Pane $share={185} $ruled>
                <Plot>
                  <InfoLine $gap={2}>
                    <Bullet /><Tint>缠论买点(1)</Tint><Tint $color="#b000b0">一买: <Tint $color="#e000a0">0.00</Tint></Tint>
                    <Tint $color={DOWN}>二买: 0.00</Tint><Tint $color="#a000a8">三买: 0.00</Tint><Tint $color="#009c18">强二买: 0.00</Tint>
                  </InfoLine>
                  <Canvas><SubPlot /></Canvas>
                </Plot>
                <Axis $pad="7px 0 20px">
                  {Array.from({ length: 8 }, (_, i) => <li key={i}>{(4 - i / 2).toFixed(2)}</li>)}
                </Axis>
              </Pane>
              <DateRow>
                <Months>
                  {MONTHS.map(([t, span]) => (
                    <Month key={t} $span={span}>{t}{t === "9" && <DateCursor>2025/09/29/一 87 至今涨幅-20.37%</DateCursor>}</Month>
                  ))}
                </Months>
                <Corner>日线</Corner>
              </DateRow>
              <TabRow>
                <Tabs $inset={1}>
                  {INDICATORS.map(([t, pad]) => <Tab key={t} $pad={pad} $color={t === "管理" ? DOWN : undefined}>{t}</Tab>)}
                </Tabs>
                <Corner $split><button>+</button><button>-</button></Corner>
              </TabRow>
            </ChartColumn>
          </Work>
          <TabRow $low>
            <Tabs $inset={2}>
              {EXTENSIONS.map((t) => <Tab key={t} $color={t[0] === "*" ? AMBER : undefined}>{t.replace("*", "")}</Tab>)}
            </Tabs>
            <Tab $color={AMBER}>图文F10</Tab>
            <Tab $color={AMBER} $pad={4}>侧边栏</Tab>
          </TabRow>
        </Center>
        <Quote>
          <StockTitle><sup>R</sup>600376<b>首开股份</b></StockTitle>
          <Block>
            <Line $cols={PAIR_COLS}>
              <Cell>委比</Cell><Cell $right $color={DOWN}>-42.41%</Cell><Cell $in={9}>委差</Cell><Cell $in={1} $color={DOWN}>-137142</Cell>
            </Line>
          </Block>
          <Book rows={ASKS} />
          <Book rows={BIDS} />
          <Pairs rows={STATS} />
          <Pairs rows={SHARES} />
          <Block $roomy><Line $cols="1fr"><Cell>交易状态: 连续竞价 11:30:00</Cell></Line></Block>
          <Block $roomy>
            <Line $cols="57px 16px 38px 30px">
              <Cell>主力净额▤</Cell><Swatch $w={7} $bg="#f02440" /><Cell $right $color={UP}>998.3万</Cell><Cell $in={12} $color={UP}>5%</Cell>
            </Line>
            <Line $cols="57px 16px 38px 30px">
              <Cell>5日主力净额</Cell><Swatch $w={14} $bg="#44ffff" /><Cell $right $color={DOWN}>-1840万</Cell><Cell $in={8} $color={DOWN}>-1%</Cell>
            </Line>
          </Block>
          <TickArea>
            <Ticks>
              <tbody>
                {Object.entries(TICKS).flatMap(([time, rows]) =>
                  rows.split("|").map((row, i) => {
                    const [cent, volume, side, count] = row.split(" ");
                    return (
                      <TickRow key={time + i} $first={i === 0} $buy={side === "B"}>
                        <td>{i === 0 ? time : ""}</td><td>5.5{cent}</td><td>{volume}万</td><td>{side}</td><td>{count}</td>
                      </TickRow>
                    );
                  })
                )}
              </tbody>
            </Ticks>
          </TickArea>
          <QuoteTabs>{[..."笔价细势联值主详领"].map((t, i) => <QuoteTab key={t} $on={i === 0}>{t}</QuoteTab>)}</QuoteTabs>
        </Quote>
      </Body>
    </Page>
  );
}
